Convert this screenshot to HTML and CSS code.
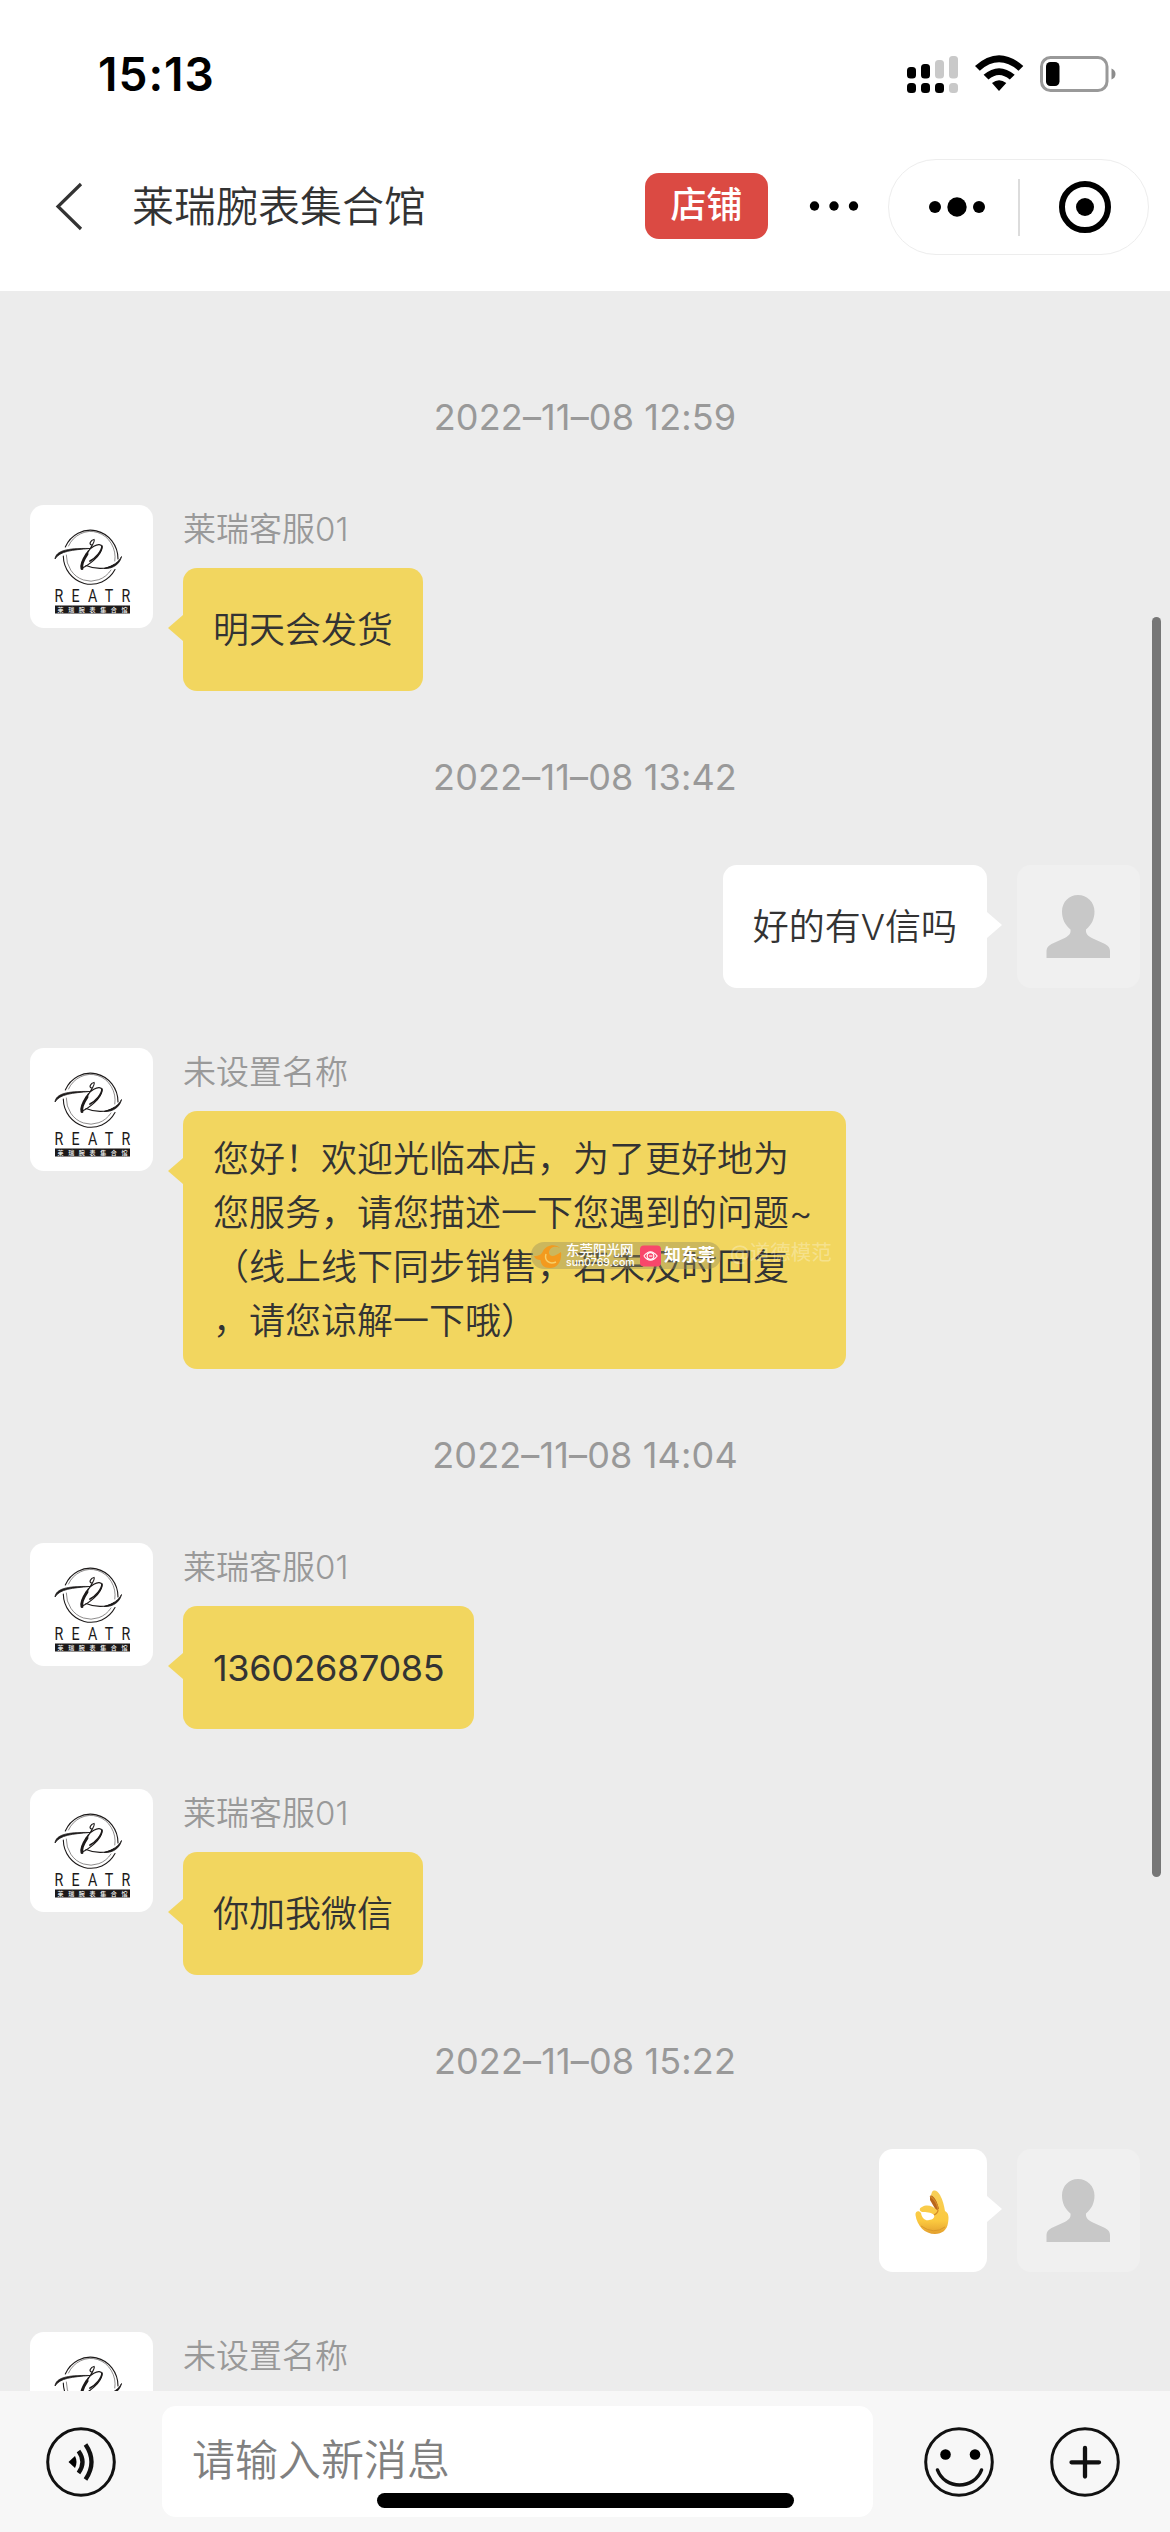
FILE: index.html
```html
<!DOCTYPE html>
<html lang="zh-CN">
<head>
<meta charset="utf-8">
<title>莱瑞腕表集合馆</title>
<link rel="stylesheet" href="styles.css">
</head>
<body>
<svg class="defs" width="0" height="0" aria-hidden="true">
  <symbol id="brand" viewBox="0 0 123 123">
    <g fill="none" stroke="#1c1919" stroke-linecap="round">
      <path d="M35.300 42A27.600 28.800 0 0 1 88 54" stroke-width="1.100"/>
      <path d="M33.300 51A27.600 28.800 0 0 0 85 64.500" stroke-width="1.100"/>
      <path d="M38.500 41A24.500 25.700 0 0 1 84.800 56M36.300 50A24.500 25.700 0 0 0 81 65" stroke-width=".5"/>
      <path d="M62 40C58 39.500 61 35 64 34.500C66 36 60 43 56.500 50M52 63C57 61 72 51 72 42C71 36 57 42 54.500 54" stroke-width="1.200"/>
      <path d="M57 49C53 55 51 60 52 63.500" stroke-width="3"/>
      <path d="M72 41C72 46 66 53 60 56" stroke-width="1.700"/>
      <path d="M56 60.500C64 64 76 65 84 60" stroke-width="1.200"/>
    </g>
    <path d="M25 54C26 46 36 43 60 43.500C42 45 30 46 25 54ZM74 63.500C83 64 90 59 91.500 51.500C89 57 83 61 74 63.500Z" fill="#1c1919" stroke="#1c1919" stroke-width=".8"/>
    <text transform="translate(24.500 97.300) scale(.75 1)" x="0" y="0" textLength="101" lengthAdjust="spacing" class="brand-latin">REATR</text>
    <rect x="25" y="100.500" width="75" height="8" fill="#1c1919"/>
    <text x="27.500" y="106.700" textLength="70" lengthAdjust="spacing" class="brand-cjk">莱瑞腕表集合馆</text>
  </symbol>
  <symbol id="person" viewBox="0 0 123 123">
    <path d="M61 30C70 30 77.500 37 77.500 46.500C77.500 54 74.500 60 69 64.500C68.500 69 71 71.500 77 74L88 79Q93 81.500 93 86V93H29.500V86Q29.500 81.500 34.500 79L45.500 74C52 71 54 69 53.500 64.500C48 60 45 54 45 46.500C45 37 52 30 61 30Z" fill="#c8c8c8"/>
  </symbol>
</svg>

<div class="app">
  <header class="top">
    <div class="status">
      <div class="clock">15:13</div>
      <svg class="status-icons" viewBox="0 0 212 40">
        <g>
          <rect x="2" y="13" width="9" height="11.500" rx="3.500"/>
          <rect x="16" y="10" width="9" height="14.500" rx="3.500"/>
          <rect x="30" y="6" width="9" height="18.500" rx="3.500" fill="#c9c9c9"/>
          <rect x="44" y="2" width="9" height="22.500" rx="3.500" fill="#c9c9c9"/>
          <rect x="2" y="29" width="9" height="10" rx="3.500"/>
          <rect x="16" y="29" width="9" height="10" rx="3.500"/>
          <rect x="30" y="29" width="9" height="10" rx="3.500"/>
          <rect x="44" y="29" width="9" height="10" rx="3.500" fill="#c9c9c9"/>
        </g>
        <path d="M70 12Q94 -9.500 118.300 12L113.500 16.700Q94 0 74.800 16.700ZM78.600 20.800Q94 7.500 109.700 20.800L104.800 25.500Q94 16.500 83.500 25.500ZM87 29Q94 23.500 101.300 29L94 37Z"/>
        <rect x="136.500" y="3.500" width="65.500" height="33" rx="9" fill="none" stroke="#999" stroke-width="3"/>
        <rect x="141" y="8" width="13.500" height="24" rx="4.500"/>
        <path d="M206.500 14.500Q210.500 16 210.500 20T206.500 25.500Z" fill="#8c8c8c"/>
      </svg>
    </div>
    <div class="nav">
      <svg class="back" viewBox="0 0 30 50"><path d="M27 2L4 24.500L27 47" fill="none" stroke="#333" stroke-width="3.200"/></svg>
      <h1 class="title">莱瑞腕表集合馆</h1>
      <div class="shop">店铺</div>
      <svg class="more" viewBox="0 0 50 10"><circle cx="5.500" cy="5" r="4.700"/><circle cx="25" cy="5" r="4.700"/><circle cx="44.500" cy="5" r="4.700"/></svg>
      <div class="capsule">
        <svg class="menu-dots" viewBox="0 0 58 20"><circle cx="7" cy="10" r="6"/><circle cx="29" cy="10" r="9.700"/><circle cx="51" cy="10" r="6"/></svg>
        <span class="divider"></span>
        <svg class="target" viewBox="0 0 52 52"><circle cx="26" cy="26" r="23" fill="none" stroke="#000" stroke-width="6"/><circle cx="26" cy="26" r="9"/></svg>
      </div>
    </div>
  </header>

  <main class="chat">
    <time class="date">2022–11–08 12:59</time>

    <section class="row">
      <svg class="avatar"><use href="#brand"/></svg>
      <div class="body"><div class="name">莱瑞客服01</div><div class="bubble">明天会发货</div></div>
    </section>

    <time class="date">2022–11–08 13:42</time>

    <section class="row mine">
      <div class="bubble">好的有V信吗</div>
      <svg class="avatar"><use href="#person"/></svg>
    </section>

    <section class="row">
      <svg class="avatar"><use href="#brand"/></svg>
      <div class="body">
        <div class="name">未设置名称</div>
        <div class="bubble long">
          <p>您好！欢迎光临本店，为了更好地为<br>您服务，请您描述一下您遇到的问题~<br>（线上线下同步销售，若未及时回复<br>，请您谅解一下哦）</p>
          <div class="mark">
            <div class="mark-pill">
              <svg class="sun" viewBox="0 0 28 24"><path d="M0 12C5 12 8 10 9 7C12 1 21-1 26 4C20 1 15 4 15 9C16 14 22 12 27 8C28 16 24 24 16 24C10 24 7 21 6.500 16C4 16 1 15 0 12Z" fill="#f39a1e"/><path d="M12 10C10 16 15 21 22 18" fill="none" stroke="#f8cf68" stroke-width="1.500"/></svg>
              <div class="mark-site"><span>东莞阳光网</span><small>sun0769.com</small></div>
              <svg class="eye" viewBox="0 0 22 22"><rect width="22" height="22" rx="4" fill="#f8476b"/><g fill="none" stroke="#fff" stroke-width="1.200"><path d="M4 11Q11 2 18 11Q11 20 4 11"/><circle cx="11" cy="11" r="3.500"/><path d="M9.500 11H13"/></g></svg>
              <b>知东莞</b>
            </div>
            <span class="mark-author">@道德模范</span>
          </div>
        </div>
      </div>
    </section>

    <time class="date">2022–11–08 14:04</time>

    <section class="row">
      <svg class="avatar"><use href="#brand"/></svg>
      <div class="body"><div class="name">莱瑞客服01</div><div class="bubble digits">13602687085</div></div>
    </section>

    <section class="row">
      <svg class="avatar"><use href="#brand"/></svg>
      <div class="body"><div class="name">莱瑞客服01</div><div class="bubble">你加我微信</div></div>
    </section>

    <time class="date">2022–11–08 15:22</time>

    <section class="row mine">
      <div class="bubble">
        <svg class="emoji" viewBox="0 0 48 48" role="img" aria-label="OK">
          <defs><linearGradient id="skin" x1="0" y1="0" x2="0" y2="1"><stop offset="0" stop-color="#f8cf58"/><stop offset=".7" stop-color="#fbc93f"/><stop offset="1" stop-color="#e39f2d"/></linearGradient></defs>
          <path d="M21 7L25 5L31 20L28 23L21 11Z" fill="#b9661b"/>
          <path d="M23 3C25 0 29 2 31 6C34 11 35 17 36 22C40 24 40 29 39 34C38 41 33 45 26 45C16 45 8 37 6.500 26C6 22 10 21 12 24C13 30 17 32 20 31C24 31 26 28 25 26C22 23 17 23 13 23C10 22 10 19 13 18C18 15 24 17 28 21L30 20C29 15 27 9 22 6Z" fill="url(#skin)"/>
          <path d="M21 7Q28 12 29 20M25 26Q29 24 29 21" fill="none" stroke="#d48a26" stroke-width="1.300"/>
          <path d="M12 37Q25 46 36 38" fill="none" stroke="#da982c" stroke-width="1"/>
        </svg>
      </div>
      <svg class="avatar"><use href="#person"/></svg>
    </section>

    <section class="row">
      <svg class="avatar"><use href="#brand"/></svg>
      <div class="body"><div class="name">未设置名称</div></div>
    </section>
    <div class="scrollbar"></div>
  </main>

  <footer class="composer">
    <svg class="tool" viewBox="0 0 70 70"><circle cx="35" cy="35" r="33.300" fill="none" stroke="#111" stroke-width="3"/><path d="M22.500 35L29 29Q32 35 29 41Z"/><path d="M32.500 24Q40.500 35 32.500 46M39.500 17.500Q51.500 35 39.500 52.500" fill="none" stroke="#111" stroke-width="4.300"/></svg>
    <div class="field">请输入新消息</div>
    <svg class="tool" viewBox="0 0 70 70"><circle cx="35" cy="35" r="33.300" fill="none" stroke="#111" stroke-width="3"/><circle cx="21.500" cy="27.500" r="5.300"/><circle cx="51" cy="27.500" r="5.300"/><path d="M13.500 43C21 63 50 63 57.500 43" fill="none" stroke="#111" stroke-width="3.500" stroke-linecap="round"/></svg>
    <svg class="tool" viewBox="0 0 70 70"><circle cx="35" cy="35" r="33.300" fill="none" stroke="#111" stroke-width="3"/><path d="M35 21V49.500M21.500 35.300H49" fill="none" stroke="#111" stroke-width="4.300" stroke-linecap="round"/></svg>
    <div class="home"></div>
  </footer>
</div>
</body>
</html>
```
FILE: styles.css
```css
* { box-sizing: border-box; }
body {
  margin: 0;
  font-family: Inter, "Noto Sans CJK SC", sans-serif;
  color: #333;
}
h1, p { margin: 0; }
svg { display: block; flex: none; }
.defs { position: absolute; }

.app {
  width: 1170px;
  height: 2532px;
  display: flex;
  flex-direction: column;
  overflow: hidden;
  background: #ececec;
}

/* status bar and navigation */
.top { height: 291px; flex: none; background: #fff; }
.status {
  height: 148px;
  padding: 0 53px 0 98px;
  display: flex;
  align-items: center;
  justify-content: space-between;
}
.clock { font-size: 46px; font-weight: 600; letter-spacing: 1px; color: #000; }
.status-icons { width: 212px; height: 40px; }
.nav {
  height: 118px;
  padding: 0 21px 0 54px;
  display: flex;
  align-items: center;
}
.back { width: 30px; height: 50px; }
.title { margin-left: 48px; font-size: 42px; font-weight: 350; line-height: 60px; }
.shop {
  width: 123px;
  height: 66px;
  margin: 0 0 2px auto;
  border-radius: 14px;
  background: #db4a43;
  color: #fff;
  font-size: 36px;
  font-weight: 500;
  line-height: 65px;
  text-align: center;
}
.more { width: 50px; height: 10px; margin: 0 29px 3px 41px; }
.capsule {
  width: 261px;
  height: 96px;
  padding: 0 37px 0 39px;
  border: 1.500px solid #ededed;
  border-radius: 48px;
  display: flex;
  align-items: center;
}
.menu-dots { width: 58px; height: 20px; }
.divider { width: 1.500px; height: 57px; margin: 0 auto 0 32px; background: #dcdcdc; }
.target { width: 52px; height: 52px; }

/* conversation */
.chat {
  position: relative;
  flex: 1;
  min-height: 0;
  padding: 100px 30px 0;
  display: flex;
  flex-direction: column;
  gap: 60px;
  overflow: hidden;
}
.date {
  flex: none;
  height: 54px;
  font-size: 36px;
  line-height: 53px;
  letter-spacing: .15px;
  text-align: center;
  color: #999;
}
.row { flex: none; display: flex; gap: 30px; }
.avatar { width: 123px; height: 123px; border-radius: 14px; background: #fff; }
.brand-latin { font: 400 19px "Roboto", sans-serif; fill: #1c1919; }
.brand-cjk { font: 500 6px "Noto Sans CJK SC", sans-serif; fill: #fff; }
.name { height: 63px; font-size: 33px; line-height: 49px; color: #999; font-weight: 350; }
.body { display: flex; flex-direction: column; align-items: flex-start; }
.bubble {
  position: relative;
  min-height: 123px;
  padding: 21px 30px;
  display: flex;
  align-items: center;
  border-radius: 14px;
  background: #f2d65f;
  font-size: 36px;
  line-height: 54px;
  font-weight: 350;
  white-space: nowrap;
}
.bubble::before {
  content: "";
  position: absolute;
  top: 47px;
  left: -15px;
  border: solid transparent;
  border-width: 13px 15px 13px 0;
  border-right-color: #f2d65f;
}
.digits { font-weight: 400; letter-spacing: -.35px; }
.long { width: 663px; }
.mine { justify-content: flex-end; }
.mine .bubble { background: #fff; }
.mine .bubble::before {
  left: auto;
  right: -15px;
  border-width: 13px 0 13px 15px;
  border-left-color: #fff;
}
.mine .avatar { background: #f0f0f0; }
.emoji { width: 48px; height: 48px; margin-top: 4px; }

/* publisher mark over the long message */
.mark {
  position: absolute;
  left: 348px;
  top: 131px;
  display: flex;
  align-items: center;
  gap: 9px;
  line-height: 1;
  color: #fff;
}
.mark-pill {
  width: 190px;
  height: 27px;
  padding-left: 3px;
  display: flex;
  align-items: center;
  gap: 4px;
  border-radius: 13px;
  background: rgba(150, 140, 90, .42);
}
.sun { width: 28px; height: 24px; }
.mark-site { width: 68px; display: flex; flex-direction: column; font-size: 13.500px; font-weight: 500; }
.mark-site small { font-size: 10.500px; line-height: 9px; }
.eye { width: 21px; height: 22px; margin-left: 2px; }
.mark b { font-size: 17px; font-weight: 700; margin-left: -1px; }
.mark-author { font-size: 20.500px; font-weight: 400; color: rgba(255, 255, 255, .3); padding-bottom: 4px; }

.scrollbar {
  position: absolute;
  top: 326px;
  right: 9px;
  width: 9px;
  height: 1260px;
  border-radius: 5px;
  background: #767676;
}

/* composer */
.composer {
  position: relative;
  flex: none;
  height: 141px;
  padding: 0 50px 0 46px;
  display: flex;
  align-items: center;
  background: #f7f7f7;
}
.tool { width: 70px; height: 70px; }
.field {
  width: 711px;
  height: 111px;
  margin: 0 51px 0 46px;
  padding-left: 30px;
  border-radius: 14px;
  background: #fff;
  color: #808080;
  font-size: 43px;
  font-weight: 350;
  line-height: 109px;
}
.field + .tool { margin-right: 56px; }
.home {
  position: absolute;
  left: 377px;
  top: 102px;
  width: 417px;
  height: 15px;
  border-radius: 8px;
  background: #000;
}
```
